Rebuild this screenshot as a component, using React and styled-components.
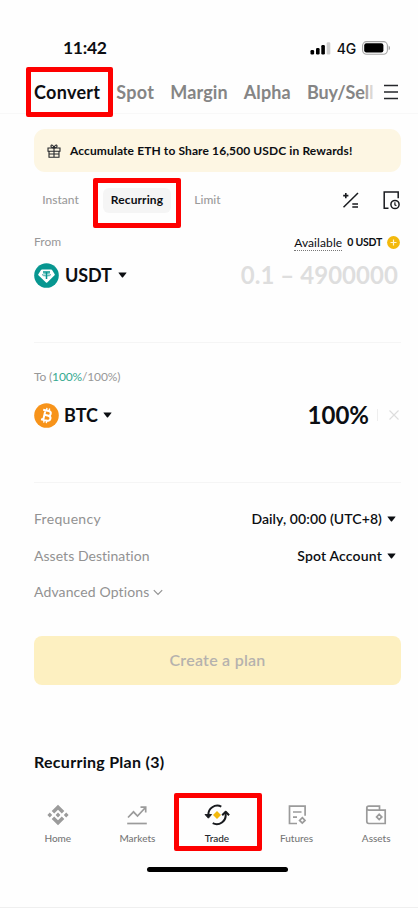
import React from 'react';
import styled, { createGlobalStyle } from 'styled-components';

const GlobalStyle = createGlobalStyle`
  * {
    box-sizing: border-box;
  }

  body {
    margin: 0;
    background: #fefefe;
    font-family: Lato, 'Liberation Sans', sans-serif;
    font-variant-ligatures: none;
    color: #0c0e12;
  }
`;

const Screen = styled.div`
  position: relative;
  width: 418px;
  height: 908px;
  overflow: hidden;
  display: flex;
  flex-direction: column;
  background: #fefefe;
  border-bottom: 1px solid #efefef;
`;

const Label = styled.span`
  font-size: ${({ $size }) => $size}px;
  font-weight: ${({ $weight }) => $weight || 400};
  letter-spacing: ${({ $track }) => $track || 0}px;
  color: ${({ $color }) => $color || '#0c0e12'};
  line-height: 1;
  white-space: nowrap;
`;

const NetworkLabel = styled(Label)`
  padding-top: 2px;
  font-family: Inter, sans-serif;
`;

const StatusBar = styled.header`
  flex: none;
  height: 70px;
  padding: 25px 28px 0 63px;
  display: flex;
  align-items: center;
  justify-content: space-between;
`;

const StatusIcons = styled.div`
  display: flex;
  align-items: center;
  gap: 6px;
`;

const TabBar = styled.nav`
  flex: none;
  height: 44px;
  padding: 0 19px 0 34px;
  display: flex;
  align-items: center;
  border-bottom: 1px solid #f8f8f8;
`;

const TabList = styled.div`
  position: relative;
  width: 340px;
  height: 30px;
  display: flex;
  align-items: center;
  gap: 16px;

  &::after {
    content: '';
    position: absolute;
    top: 0;
    right: 0;
    width: 8px;
    height: 100%;
    background: linear-gradient(to right, rgba(254, 254, 254, 0.2), rgba(254, 254, 254, 0.9));
  }
`;

const MenuIcon = styled.svg`
  margin-left: 9px;
`;

const Banner = styled.div`
  flex: none;
  height: 43px;
  margin: 15px 17px 0 34px;
  padding-left: 13px;
  display: flex;
  align-items: center;
  gap: 9px;
  border-radius: 11px;
  background: #fdf6e3;
`;

const ModeBar = styled.div`
  flex: none;
  height: 56px;
  padding: 0 18px 0 34px;
  display: flex;
  align-items: center;
`;

const Mode = styled.div`
  height: 25px;
  width: ${({ $width }) => $width}px;
  margin-right: ${({ $gap }) => $gap || 0}px;
  display: flex;
  align-items: center;
  justify-content: center;
  border-radius: 6px;
  background: ${({ $active }) => ($active ? '#f5f5f5' : 'transparent')};
`;

const ModeTools = styled.div`
  margin-left: auto;
  display: flex;
  align-items: center;
  gap: 23px;
`;

const Row = styled.div`
  flex: none;
  height: ${({ $height }) => $height}px;
  padding: 0 ${({ $right }) => $right || 18}px 0 34px;
  display: flex;
  align-items: center;
  justify-content: space-between;
`;

const Group = styled.div`
  display: flex;
  align-items: center;
  gap: ${({ $gap }) => $gap || 5}px;
`;

const Underlined = styled(Label)`
  padding: 3px 0 1px;
  border-bottom: 1px dotted #777;
`;

const Divider = styled.div`
  flex: none;
  height: 1px;
  margin: ${({ $top }) => $top}px 17px ${({ $bottom }) => $bottom}px 34px;
  background: #f5f5f5;
`;

const Separator = styled.div`
  width: 1px;
  height: 12px;
  margin: 0 3px 0 1px;
  background: #eeeeee;
`;

const PlanButton = styled.button`
  flex: none;
  height: 49px;
  margin: 26px 17px 0 34px;
  padding: 0;
  border: 0;
  border-radius: 8px;
  background: #fdf0c1;
  font-family: inherit;
`;

const PlanTitle = styled.div`
  flex: none;
  height: 24px;
  margin: 65px 0 0 34px;
  display: flex;
  align-items: center;
`;

const BottomNav = styled.nav`
  flex: none;
  height: 57px;
  margin: 20px 2px 0 18px;
  display: grid;
  grid-template-columns: repeat(5, 1fr);
`;

const NavItem = styled.div`
  padding-top: 10px;
  display: flex;
  flex-direction: column;
  align-items: center;
  gap: 7px;
`;

const HomeIndicator = styled.div`
  flex: none;
  width: 141px;
  height: 5px;
  margin: 16px 0 0 147px;
  border-radius: 3px;
  background: #000;
`;

// Red markers drawn over the screen
const Marker = styled.div`
  position: absolute;
  left: ${({ $x }) => $x}px;
  top: ${({ $y }) => $y}px;
  width: ${({ $w }) => $w}px;
  height: ${({ $h }) => $h}px;
  border: 5px solid #fe0000;
  border-radius: 2px;
`;

const Caret = () => (
  <svg width="9" height="6" viewBox="0 0 9 6">
    <path d="M0.8 0.4h7.4q.6.1.2.7L5.1 5.3q-.6.5-1.2 0L.6 1.1Q.2.5.8.4z" fill="#0c0e12" />
  </svg>
);

const Signal = () => (
  <svg width="21" height="14" viewBox="0 0 21 14">
    <rect x="0.5" y="9" width="3.6" height="4.5" rx="1.2" fill="#000" />
    <rect x="6" y="7" width="3.6" height="6.5" rx="1.2" fill="#000" />
    <rect x="11.3" y="4" width="3.6" height="9.5" rx="1.2" fill="#000" />
    <rect x="16.7" y="1.2" width="3.6" height="12.3" rx="1.2" fill="#cfcfcf" />
  </svg>
);

const Battery = () => (
  <svg width="28" height="14" viewBox="0 0 28 14">
    <rect x="0.6" y="0.6" width="24.8" height="12.6" rx="4" fill="none" stroke="#a5a5a5" strokeWidth="1.1" />
    <rect x="2.2" y="2.3" width="19.2" height="9.2" rx="2.2" fill="#000" />
    <path d="M26.6 4.6q1.5.7 1.5 2.3t-1.5 2.3z" fill="#a5a5a5" />
  </svg>
);

const Gift = () => (
  <svg width="14" height="14" viewBox="0 0 14 14" fill="none" stroke="#25272b" strokeWidth="1.1">
    <path d="M1 4h12v3.300H1zM2 7.300v5.900h10V7.300M7 4v9M2 10h10" />
    <path d="M7 4C5.800 3.900 3.500 3.500 4 1.800 4.700.1 6.700 1.500 7 4c.3-2.500 2.300-3.900 3-2.200C10.500 3.500 8.200 3.900 7 4z" />
  </svg>
);

const Calculator = () => (
  <svg width="17" height="18" viewBox="0 0 17 18" fill="none" stroke="#181a1e" strokeWidth="1.5">
    <path d="M1.500 16.300 16 2" />
    <path d="M1.200 4.600h5.200M3.800 2v5.200M10.300 13h5.700M10.300 16h5.700" strokeWidth="1.6" />
  </svg>
);

const History = () => (
  <svg width="18" height="20" viewBox="0 0 18 20" fill="none" stroke="#181a1e" strokeWidth="1.5">
    <path d="M6.500 18.200H2.200V1.900h14v6.300" />
    <circle cx="13" cy="14.500" r="4.100" />
    <path d="M12.900 12.300v2.500l1.500.9" strokeWidth="1.200" />
  </svg>
);

const AddFunds = () => (
  <svg width="13" height="13" viewBox="0 0 13 13">
    <circle cx="6.5" cy="6.5" r="6.400" fill="#f3b90c" />
    <path d="M6.500 3.500v6M3.500 6.500h6" stroke="#fff4d2" strokeWidth="1.2" />
  </svg>
);

const Tether = () => (
  <svg width="25" height="25" viewBox="0 0 25 25">
    <circle cx="12.500" cy="12.500" r="12.300" fill="#079690" />
    <path d="M8 6.500h9.200q.6 0 .9.500l2.600 4.300q.3.500-.1.900l-7.400 7.300q-.6.500-1.200 0L4.400 12.200q-.4-.4-.1-.9L7 7q.3-.5 1-.5z" fill="#fff" />
    <path d="M9 8.900h7M12.500 8.900v7" stroke="#079690" strokeWidth="1.500" />
    <ellipse cx="12.500" cy="11.800" rx="4.100" ry="1.100" fill="none" stroke="#079690" strokeWidth="0.800" />
  </svg>
);

const Bitcoin = () => (
  <svg width="25" height="25" viewBox="0 0 25 25" fill="none" stroke="#fff">
    <circle cx="12.500" cy="12.500" r="12.300" fill="#f7931a" stroke="none" />
    <g transform="rotate(13 12.5 12.5)" strokeWidth="2">
      <path d="M8 7.700h5.700c3.400 0 3.400 4.600 0 4.600h-3.400 4c3.700 0 3.700 5.100 0 5.100H8M10.300 7.700v9.700" />
      <path d="M11.300 5v2.800M14 5v2.800M11.300 17.200V20M14 17.200V20" strokeWidth="1.400" />
    </g>
  </svg>
);

const Close = () => (
  <svg width="12" height="12" viewBox="0 0 12 12" stroke="#dddddd" strokeWidth="1.100">
    <path d="M1.500 1.500l9 9M10.500 1.500l-9 9" />
  </svg>
);

const Chevron = () => (
  <svg width="10" height="7" viewBox="0 0 10 7" fill="none" stroke="#929292" strokeWidth="1.200">
    <path d="M.8 1.200 5 5.400l4.200-4.200" />
  </svg>
);

const HomeIcon = () => (
  <svg width="22" height="22" viewBox="0 0 22 22" fill="#9b9b9b">
    <path d="M11 .8l6.300 6.300-2.500 2.500L11 5.800 7.200 9.600 4.700 7.100zM11 21.200l6.300-6.300-2.500-2.500-3.800 3.800-3.800-3.800-2.500 2.500z" />
    <path d="M11 8.600l2.400 2.400-2.400 2.400L8.600 11zM2.800 8.600 5.200 11l-2.400 2.400L.4 11zM19.200 8.600l2.400 2.400-2.400 2.400-2.400-2.400z" />
  </svg>
);

const MarketsIcon = () => (
  <svg width="22" height="22" viewBox="0 0 22 22" fill="none" stroke="#9b9b9b" strokeWidth="1.700">
    <path d="M2 13.500 7.500 7.800l4 4.300L19.500 3.500M14.500 3.200h5.200v5.200" />
    <path d="M1.200 19.500h19.600" />
  </svg>
);

const TradeIcon = () => (
  <svg width="26" height="22" viewBox="0 0 26 22" fill="none" stroke="#181a1e" strokeWidth="2">
    <path d="M17.300 2.600A9 9 0 0 0 4.400 11.500M8.700 19.200A9 9 0 0 0 21.600 10" />
    <path d="M1 10.500h6.600L4.400 14.200z" fill="#181a1e" strokeWidth="0.900" strokeLinejoin="round" />
    <path d="M18.200 11.200 21.700 7.700l3.400 3.500" strokeLinejoin="round" />
    <path d="M13 7l4 4-4 4-4-4z" fill="#f3b90c" stroke="none" />
  </svg>
);

const FuturesIcon = () => (
  <svg width="22" height="22" viewBox="0 0 22 22" fill="none" stroke="#9b9b9b" strokeWidth="1.700">
    <path d="M11 19.500H3.500V2.200h15.600v9.600M7 8h8.500M7 13.200h4" />
    <path d="M16.300 13.700l2.700 2.700-2.700 2.700-2.700-2.700z" />
  </svg>
);

const AssetsIcon = () => (
  <svg width="22" height="22" viewBox="0 0 22 22" fill="none" stroke="#9b9b9b" strokeWidth="1.700">
    <path d="M14.500 6V2.200H3.800Q1.800 2.200 1.800 4v13.300q0 2.200 2 2.200h16.400V6.200H4Q1.800 6.200 1.800 4" />
    <path d="M14.200 10.300l2.600 2.600-2.600 2.600-2.600-2.600z" />
  </svg>
);

const tabs = [
  { name: 'Convert', track: 0.3, active: true },
  { name: 'Spot', track: 0.3 },
  { name: 'Margin', track: 0.1 },
  { name: 'Alpha', track: 0.15 },
  { name: 'Buy/Sell', track: -0.1 },
];

const navItems = [
  { name: 'Home', Icon: HomeIcon },
  { name: 'Markets', Icon: MarketsIcon },
  { name: 'Trade', Icon: TradeIcon, active: true },
  { name: 'Futures', Icon: FuturesIcon },
  { name: 'Assets', Icon: AssetsIcon },
];

const App = () => {
  return (
    <>
      <GlobalStyle />
      <Screen>
        <StatusBar>
          <Label $size={17.5} $weight={700} $track={-0.3}>11:42</Label>
          <StatusIcons>
            <Signal />
            <NetworkLabel $size={14} $weight={500} $track={-0.2}>4G</NetworkLabel>
            <Battery />
          </StatusIcons>
        </StatusBar>

        <TabBar>
          <TabList>
            {tabs.map(({ name, track, active }) => (
              <Label key={name} $size={18} $weight={700} $track={track} $color={active ? '#0c0e12' : '#858585'}>
                {name}
              </Label>
            ))}
          </TabList>
          <MenuIcon width="16" height="16" viewBox="0 0 16 16" stroke="#25272b" strokeWidth="1.500">
            <path d="M1 1.500h14M1 8h14M1 14.500h14" />
          </MenuIcon>
        </TabBar>

        <Banner>
          <Gift />
          <Label $size={12} $weight={700} $track={0.11}>Accumulate ETH to Share 16,500 USDC in Rewards!</Label>
        </Banner>

        <ModeBar>
          <Mode $width={53} $gap={16}>
            <Label $size={12} $weight={500} $color="#9b9b9b">Instant</Label>
          </Mode>
          <Mode $width={68} $gap={16} $active>
            <Label $size={12} $weight={700} $track={0.1}>Recurring</Label>
          </Mode>
          <Mode $width={41}>
            <Label $size={12} $weight={500} $color="#9b9b9b">Limit</Label>
          </Mode>
          <ModeTools>
            <Calculator />
            <History />
          </ModeTools>
        </ModeBar>

        <Row $height={28}>
          <Label $size={12} $color="#989898">From</Label>
          <Group $gap={5}>
            <Underlined $size={12} $track={0.1}>Available</Underlined>
            <Label $size={10.5} $weight={700} $track={-0.25}>0 USDT</Label>
            <AddFunds />
          </Group>
        </Row>
        <Row $height={38} $right={20}>
          <Group $gap={6}>
            <Tether />
            <Label $size={18} $weight={700} $track={-0.15}>USDT</Label>
            <Caret />
          </Group>
          <Label $size={24} $weight={700} $color="#dedede" $track={0.05}>0.1 – 4900000</Label>
        </Row>
        <Divider $top={48} $bottom={20} />

        <Row $height={28}>
          <Label $size={12} $color="#989898" $track={-0.15}>
            To (<Label $size={12} $color="#35aa91" $track={-0.15}>100%</Label>/100%)
          </Label>
        </Row>
        <Row $height={48}>
          <Group $gap={5}>
            <Bitcoin />
            <Label $size={18} $weight={700}>BTC</Label>
            <Caret />
          </Group>
          <Group $gap={7}>
            <Label $size={24} $weight={700}>100%</Label>
            <Separator />
            <Close />
          </Group>
        </Row>
        <Divider $top={43} $bottom={18} />

        <Row $height={36} $right={22}>
          <Label $size={14} $color="#929292" $track={0.3}>Frequency</Label>
          <Group $gap={5}>
            <Label $size={14} $weight={600} $track={0.09}>Daily, 00:00 (UTC+8)</Label>
            <Caret />
          </Group>
        </Row>
        <Row $height={37} $right={22}>
          <Label $size={14} $color="#929292" $track={0.04}>Assets Destination</Label>
          <Group $gap={5}>
            <Label $size={14} $weight={600} $track={0.17}>Spot Account</Label>
            <Caret />
          </Group>
        </Row>
        <Row $height={36}>
          <Group $gap={4}>
            <Label $size={14} $color="#929292" $track={0.12}>Advanced Options</Label>
            <Chevron />
          </Group>
        </Row>

        <PlanButton>
          <Label $size={16} $weight={600} $color="#b5b2ae" $track={0.25}>Create a plan</Label>
        </PlanButton>

        <PlanTitle>
          <Label $size={16} $weight={700} $track={0.28}>Recurring Plan (3)</Label>
        </PlanTitle>

        <BottomNav>
          {navItems.map(({ name, Icon, active }) => (
            <NavItem key={name}>
              <Icon />
              <Label $size={10} $weight={500} $color={active ? '#25272b' : '#777777'}>{name}</Label>
            </NavItem>
          ))}
        </BottomNav>
        <HomeIndicator />

        <Marker $x={26} $y={67} $w={87} $h={50} />
        <Marker $x={93} $y={178} $w={88} $h={50} />
        <Marker $x={174} $y={793} $w={88} $h={58} />
      </Screen>
    </>
  );
};

export default App;
